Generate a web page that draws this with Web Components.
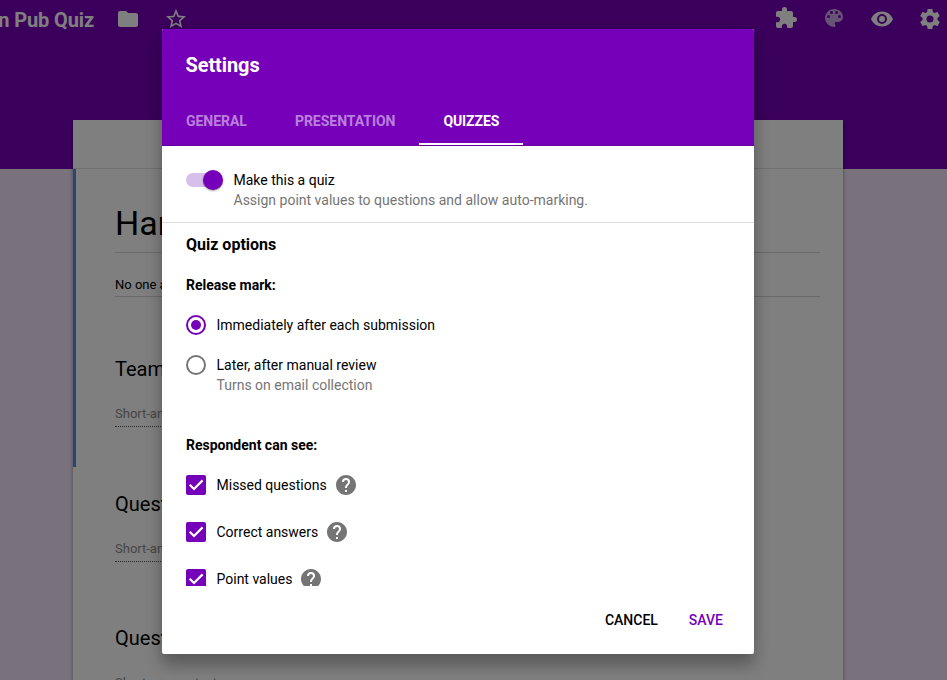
<!DOCTYPE html>
<html lang="en">
<head>
<meta charset="utf-8">
<title>Form settings</title>
<style>
html,body{margin:0;height:100%;overflow:hidden}
body{font-family:Roboto,"Liberation Sans",sans-serif;font-size:14px;line-height:20px;color:#000;--accent:#7600ba}
</style>
</head>
<body>
<form-app></form-app>
<script>
const define=(name,css,html)=>customElements.define(name,class extends HTMLElement{
  constructor(){
    super();
    const t=document.createElement('template');
    t.innerHTML=`<style>*{box-sizing:border-box}${css}</style>${typeof html==='function'?html(this):html}`;
    this.attachShadow({mode:'open'}).append(t.content.cloneNode(true));
  }
});
const icons={
  folder:'M10 4H4c-1.1 0-2 .9-2 2v12c0 1.1.9 2 2 2h16c1.1 0 2-.9 2-2V8c0-1.1-.9-2-2-2h-8z',
  star:'M22 9.24l-7.19-.62L12 2 9.19 8.63 2 9.24l5.46 4.73L5.82 21 12 17.27 18.18 21l-1.63-7.03zM12 15.4l-3.76 2.27 1-4.28-3.32-2.88 4.38-.38L12 6.1l1.71 4.04 4.38.38-3.32 2.88 1 4.28z',
  puzzle:'M20.5 11H19V7c0-1.1-.9-2-2-2h-4V3.500a2.500 2.500 0 0 0-5 0V5H4c-1.100 0-1.990.9-1.990 2v3.800H3.500c1.490 0 2.700 1.210 2.700 2.700s-1.210 2.700-2.700 2.700H2V20c0 1.100.9 2 2 2h3.800v-1.500c0-1.490 1.210-2.700 2.700-2.700s2.700 1.210 2.700 2.700V22H17c1.100 0 2-.9 2-2v-4h1.500a2.500 2.500 0 0 0 0-5z',
  palette:'M12 3a9 9 0 0 0 0 18c.83 0 1.500-.67 1.500-1.500 0-.39-.15-.74-.39-1.010-.23-.26-.38-.61-.38-.99 0-.83.67-1.500 1.500-1.500H16c2.760 0 5-2.240 5-5 0-4.420-4.030-8-9-8zm-5.500 9a1.500 1.500 0 1 1 0-3 1.500 1.500 0 0 1 0 3zm3-4a1.500 1.500 0 1 1 0-3 1.500 1.500 0 0 1 0 3zm5 0a1.500 1.500 0 1 1 0-3 1.500 1.500 0 0 1 0 3zm3 4a1.500 1.500 0 1 1 0-3 1.500 1.500 0 0 1 0 3z',
  eye:'M12 4.500C7 4.500 2.730 7.610 1 12c1.730 4.390 6 7.500 11 7.500s9.270-3.110 11-7.500c-1.730-4.390-6-7.500-11-7.500zM12 17a5 5 0 1 1 0-10 5 5 0 0 1 0 10zm0-8a3 3 0 1 0 0 6 3 3 0 0 0 0-6z',
  gear:'M19.43 12.98c.04-.32.07-.64.07-.98s-.03-.66-.07-.98l2.110-1.650c.19-.15.24-.42.12-.64l-2-3.460c-.12-.22-.39-.3-.61-.22l-2.490 1c-.52-.4-1.080-.73-1.690-.98l-.38-2.650A.488.488 0 0 0 14 2h-4c-.25 0-.46.18-.49.42l-.38 2.650c-.61.25-1.170.59-1.690.98l-2.490-1c-.23-.09-.49 0-.61.22l-2 3.460c-.13.22-.07.49.12.64l2.110 1.650c-.04.32-.07.65-.07.98s.03.66.07.98l-2.110 1.650c-.19.15-.24.42-.12.64l2 3.460c.12.22.39.3.61.22l2.490-1c.52.4 1.080.73 1.690.98l.38 2.650c.03.24.24.42.49.42h4c.25 0 .46-.18.49-.42l.38-2.650c.61-.25 1.170-.59 1.690-.98l2.490 1c.23.09.49 0 .61-.22l2-3.460c.12-.22.07-.49-.12-.64zM12 15.500a3.500 3.500 0 1 1 0-7 3.500 3.500 0 0 1 0 7z',
  help:'M12 2C6.480 2 2 6.480 2 12s4.480 10 10 10 10-4.480 10-10S17.520 2 12 2zm1 17h-2v-2h2zm2.070-7.750l-.9.920C13.450 12.900 13 13.500 13 15h-2v-.5c0-1.100.45-2.100 1.170-2.830l1.240-1.260c.37-.36.59-.86.59-1.410a2 2 0 0 0-4 0H8a4 4 0 0 1 8 0c0 .88-.36 1.680-.93 2.250z'
};
define('app-icon',':host{display:block;width:24px;height:24px;flex:none}svg{display:block;width:100%;height:100%}',
  el=>`<svg viewBox="0 0 24 24" fill="currentColor" fill-rule="evenodd"><path d="${icons[el.getAttribute('name')]}"/></svg>`);

define('top-bar',`:host{display:flex;align-items:center;height:38px;padding:0 5px 0 0;color:#fff}
.title{font-size:20px;font-weight:700;line-height:24px;width:94px;padding-top:2px;letter-spacing:-.12px;display:flex;justify-content:flex-end;white-space:nowrap}
.left,.right{display:flex;gap:24px}.left{margin-left:22px;flex:1}.dim{opacity:.65}.right app-icon:nth-child(-n+2){margin:-1px 0 1px}`,
`<div class="title">n Pub Quiz</div><div class="left"><app-icon name="folder"></app-icon><app-icon name="star"></app-icon></div>
<div class="right"><app-icon name="puzzle"></app-icon><app-icon name="palette" class="dim"></app-icon><app-icon name="eye"></app-icon><app-icon name="gear"></app-icon></div>`);

define('form-question',`:host{display:block;height:134px}
h3{margin:0;font-size:20px;font-weight:400;line-height:24px;letter-spacing:0}
.a{margin-top:23px;height:23px;width:340px;font-size:13px;line-height:20px;color:#8c8c8c;border-bottom:1px dotted #555}`,
`<h3><slot></slot></h3><div class="a">Short-answer text</div>`);

define('form-sheet',`:host{display:block;width:770px;height:600px;margin:82px 0 0 73px;background:#fff;box-shadow:0 49px 0 #fff,0 2px 4px rgba(0,0,0,.4)}
.tabs{height:49px;border-bottom:1px solid #e0e0e0}
.intro{height:298px;border-left:3px solid #4d8df8;padding:32px 23px 0 39px}
h1{margin:0;font-size:34px;font-weight:400;line-height:44px;height:52px;border-bottom:1px solid #d5d5d5}
.d{font-size:13px;height:44px;padding-top:22px;line-height:20px;border-bottom:1px solid #d5d5d5}
.qs{padding:0 24px 0 42px}.team{margin-top:60px}`,
`<div class="tabs"></div><div class="intro"><h1>Har</h1><div class="d">No one a</div><form-question class="team">Team</form-question></div>
<div class="qs" style="margin-top:25px"><form-question>Quest</form-question><form-question>Quest</form-question></div>`);

define('form-page',`:host{display:block;height:680px;overflow:hidden;background:linear-gradient(#7600b9 169px,#f2e5fb 169px)}`,
`<top-bar></top-bar><form-sheet></form-sheet>`);

define('tab-item',`:host{display:block;height:49px;padding:15px 24px 0;font-weight:700;line-height:20px;letter-spacing:-.03px;color:rgba(255,255,255,.5);white-space:nowrap}
:host([active]){color:#fff;letter-spacing:-.1px;border-bottom:2px solid #fff}`,'<slot></slot>');

define('toggle-switch',`:host{display:flex;align-items:center;justify-content:flex-end;width:37px;height:20px;flex:none}
i{width:20px;height:20px;border-radius:50%;background:var(--accent);box-shadow:0 1px 2px rgba(0,0,0,.4)}
u{width:33px;height:14px;border-radius:7px;background:#d7bfeb;margin-right:-16px}`,'<u></u><i></i>');

define('radio-dot',`:host{display:grid;place-items:center;width:20px;height:20px;flex:none;border:2px solid #757575;border-radius:50%}
i{width:10px;height:10px;border-radius:50%}:host([checked]){border-color:var(--accent)}:host([checked]) i{background:var(--accent)}`,'<i></i>');

define('check-box',`:host{display:block;width:20px;height:20px;flex:none;border-radius:2px;background:var(--accent)}svg{display:block}`,
`<svg width="20" height="20" fill="none" stroke="#fff" stroke-width="2.2"><path d="M3.700 9.700l4.300 4.300L16.600 5.400"/></svg>`);

define('option-row',`:host{display:flex;gap:10.500px;white-space:nowrap}
.hint{color:#757575}.line{display:flex}::slotted(app-icon){color:#757575;margin:-2px 0 -2px 7px}`,
`<slot name="control"></slot><div><div class="line"><slot></slot></div><div class="hint"><slot name="hint"></slot></div></div>`);

define('settings-dialog',`:host{display:flex;flex-direction:column;width:592px;height:625px;background:#fff;border-radius:2px;overflow:hidden;box-shadow:0 12px 15px rgba(0,0,0,.24),0 4px 20px rgba(0,0,0,.1)}
header{height:117px;background:var(--accent);color:#fff;border-bottom:1px solid #64009e;display:flex;flex-direction:column;justify-content:space-between;flex:none}
h2{margin:24px 23.500px 0;font-size:20px;line-height:24px;font-weight:700;letter-spacing:-.1px}
nav{display:flex}
main{height:440px;overflow:hidden;flex:none}
.quiz{height:77px;padding:24px 24px 0;border-bottom:1px solid #dedede}
.body{padding:10px 24px 0}
h3{margin:0;font-size:16px;line-height:24px;font-weight:700}
h4{margin:0;font-size:14px;line-height:20px;font-weight:700}
.radios{display:grid;gap:20px;margin:20px 0 40px}.checks{display:grid;gap:27px;margin-top:20px}
footer{flex:1;display:flex;justify-content:flex-end;gap:31px;padding:24px 31px 0 0;font-weight:500}
.save{color:var(--accent)}`,
`<header><h2>Settings</h2><nav><tab-item>GENERAL</tab-item><tab-item>PRESENTATION</tab-item><tab-item active>QUIZZES</tab-item></nav></header>
<main><section class="quiz"><option-row><toggle-switch slot="control"></toggle-switch><span>Make this a quiz</span><span slot="hint">Assign point values to questions and allow auto-marking.</span></option-row></section>
<section class="body"><h3>Quiz options</h3><h4 style="margin-top:18px">Release mark:</h4>
<div class="radios"><option-row><radio-dot slot="control" checked></radio-dot><span>Immediately after each submission</span></option-row>
<option-row><radio-dot slot="control"></radio-dot><span>Later, after manual review</span><span slot="hint">Turns on email collection</span></option-row></div>
<h4>Respondent can see:</h4>
<div class="checks"><option-row><check-box slot="control"></check-box><span>Missed questions</span><app-icon name="help"></app-icon></option-row>
<option-row><check-box slot="control"></check-box><span>Correct answers</span><app-icon name="help"></app-icon></option-row>
<option-row><check-box slot="control"></check-box><span>Point values</span><app-icon name="help"></app-icon></option-row></div></section></main>
<footer><span>CANCEL</span><span class="save">SAVE</span></footer>`);

define('form-app',`:host{display:block;position:relative;width:947px;height:680px;overflow:hidden}
.scrim{position:absolute;inset:0;background:rgba(0,0,0,.5)}
settings-dialog{position:absolute;left:162px;top:29px}`,
`<form-page></form-page><div class="scrim"></div><settings-dialog></settings-dialog>`);
</script>
</body>
</html>
